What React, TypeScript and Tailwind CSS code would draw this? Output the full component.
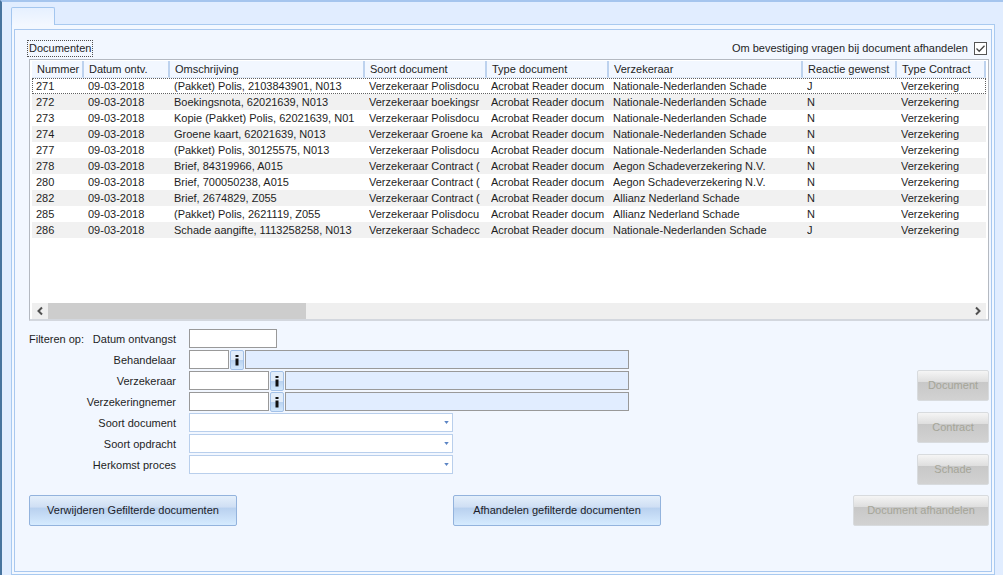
import { useState } from "react";
import clsx from "clsx";

const columns = [
  { name: "Nummer", width: "w-[52px]" },
  { name: "Datum ontv.", width: "w-[86px]" },
  { name: "Omschrijving", width: "w-[195px]" },
  { name: "Soort document", width: "w-[122px]" },
  { name: "Type document", width: "w-[122px]" },
  { name: "Verzekeraar", width: "w-[194px]" },
  { name: "Reactie gewenst", width: "w-[94px]" },
  { name: "Type Contract", width: "" },
];

const reader = "Acrobat Reader docum";
const nn = "Nationale-Nederlanden Schade";
const aegon = "Aegon Schadeverzekering N.V.";
const allianz = "Allianz Nederland Schade";

const documents = [
  ["271", "09-03-2018", "(Pakket) Polis, 2103843901, N013", "Verzekeraar Polisdocu", reader, nn, "J", "Verzekering"],
  ["272", "09-03-2018", "Boekingsnota, 62021639, N013", "Verzekeraar boekingsr", reader, nn, "N", "Verzekering"],
  ["273", "09-03-2018", "Kopie (Pakket) Polis, 62021639, N01", "Verzekeraar Polisdocu", reader, nn, "N", "Verzekering"],
  ["274", "09-03-2018", "Groene kaart, 62021639, N013", "Verzekeraar Groene ka", reader, nn, "N", "Verzekering"],
  ["277", "09-03-2018", "(Pakket) Polis, 30125575, N013", "Verzekeraar Polisdocu", reader, nn, "N", "Verzekering"],
  ["278", "09-03-2018", "Brief, 84319966, A015", "Verzekeraar Contract (", reader, aegon, "N", "Verzekering"],
  ["280", "09-03-2018", "Brief, 700050238, A015", "Verzekeraar Contract (", reader, aegon, "N", "Verzekering"],
  ["282", "09-03-2018", "Brief, 2674829, Z055", "Verzekeraar Contract (", reader, allianz, "N", "Verzekering"],
  ["285", "09-03-2018", "(Pakket) Polis, 2621119, Z055", "Verzekeraar Polisdocu", reader, allianz, "N", "Verzekering"],
  ["286", "09-03-2018", "Schade aangifte, 1113258258, N013", "Verzekeraar Schadecc", reader, nn, "J", "Verzekering"],
];

function Chevron({ d }: { d: string }) {
  return (
    <svg viewBox="0 0 8 10" className="w-2 h-[10px]" fill="none" stroke="#505050" strokeWidth="2">
      <path d={d} />
    </svg>
  );
}

function DocumentTable() {
  const [selected, setSelected] = useState("271");

  return (
    <div className="flex flex-col h-[262px] bg-white border border-[#b4b9c1] border-b-2 border-b-[#d3d7de] px-[2px] pt-px">
      <div className="flex-1 overflow-hidden">
        <table className="w-full table-fixed border-collapse">
          <thead>
            <tr>
              {columns.map((col) => (
                <th key={col.name} className={clsx("p-0 h-[17px] text-left font-normal", col.width)}>
                  <div className="h-[17px] leading-[17px] pl-[5px] whitespace-nowrap overflow-hidden bg-[#f2f7ff] border-r-2 border-b border-r-[#bdd2ee] border-b-[#dfe9f7]">
                    {col.name}
                  </div>
                </th>
              ))}
            </tr>
          </thead>
          <tbody>
            {documents.map((doc) => (
              <tr
                key={doc[0]}
                onClick={() => setSelected(doc[0])}
                className={clsx(
                  "even:bg-[#f1f1f1]",
                  selected === doc[0] && "outline-1 outline-dotted -outline-offset-1 outline-[#606060]"
                )}
              >
                {doc.map((value, i) => (
                  <td key={i} className="h-4 p-0 pl-1 pr-[2px]">
                    <div className="h-4 leading-4 overflow-hidden whitespace-nowrap">{value}</div>
                  </td>
                ))}
              </tr>
            ))}
          </tbody>
        </table>
      </div>
      <div className="flex h-4 bg-[#efefef]">
        <button aria-label="Links" className="w-4 flex items-center justify-center">
          <Chevron d="M6 1.500 L2.500 5 L6 8.500" />
        </button>
        <div className="flex-1">
          <div className="w-[28%] h-full bg-[#cdcdcd]" />
        </div>
        <button aria-label="Rechts" className="w-4 flex items-center justify-center">
          <Chevron d="M2 1.500 L5.500 5 L2 8.500" />
        </button>
      </div>
    </div>
  );
}

function Label({ id, text }: { id: string; text: string }) {
  return (
    <label htmlFor={id} className="text-right leading-[19px] pt-px h-[19px]">
      {text}
    </label>
  );
}

function LookupField({ id, small }: { id: string; small?: boolean }) {
  return (
    <div className="flex h-[19px]">
      <input
        id={id}
        type="text"
        className={clsx("h-[19px] bg-white border border-[#999] px-1 outline-none", small ? "w-10" : "w-20")}
      />
      <button
        aria-label="Zoeken"
        className="w-[14px] h-5 ml-px mr-px flex items-center justify-center rounded-xs border border-[#a3c1e8] bg-linear-to-b from-[#e2edfa] from-50% via-[#b9d2f0] via-50% to-[#d3e8fc]"
      >
        <svg viewBox="0 0 4 12" className="w-1 h-3" fill="#111">
          <path d="M0.500 1h3v2h-3z M0.500 4.500h3v7h-3z" />
        </svg>
      </button>
      <input
        type="text"
        readOnly
        aria-label="Omschrijving"
        className="flex-1 min-w-0 h-[19px] bg-[#e1edff] border border-[#999] px-1 outline-none"
      />
    </div>
  );
}

function Combo({ id }: { id: string }) {
  return (
    <div className="relative w-[264px] h-[19px]">
      <select id={id} className="block w-full h-[19px] appearance-none bg-white border border-[#b9cfec] px-1 outline-none">
        <option></option>
      </select>
      <svg viewBox="0 0 6 4" className="absolute right-1 top-2 w-[5px] h-[3px] pointer-events-none" fill="#5b84c4">
        <path d="M0 0h6L3 4z" />
      </svg>
    </div>
  );
}

function ActionButton({ text, disabled, className }: { text: string; disabled?: boolean; className: string }) {
  return (
    <button
      disabled={disabled}
      className={clsx(
        "h-[31px] rounded-xs border whitespace-nowrap",
        disabled
          ? "border-[#d8dbde] text-[#a5a598] bg-[linear-gradient(#f5f5f5,#dedede_38%,#c8c8c8_39%,#d2d2d2)]"
          : "border-[#93b3dd] text-[#1c1c28] bg-[linear-gradient(#e4effb,#cfdff4_38%,#b9d1ef_42%,#d6ebff)]",
        className
      )}
    >
      {text}
    </button>
  );
}

export default function App() {
  const [confirm, setConfirm] = useState(true);

  return (
    <div className="min-h-screen flex flex-col bg-[#e1edff] border-l-2 border-l-[#47749f] border-t-2 border-t-[#a5c5ee] pl-[9px] pr-2 pt-[5px] font-['Liberation_Sans',Arial,sans-serif] text-[11px] text-[#1e1e1e]">
      <div role="tablist" className="flex h-[17px]">
        <button
          role="tab"
          aria-selected="true"
          aria-label="Documenten"
          className="w-11 h-[18px] relative rounded-t-xs border border-b-0 border-[#a3c6ef] bg-linear-to-b from-[#e6f0ff] to-[#f3f8ff]"
        />
      </div>
      <div className="flex-1 flex flex-col border border-[#a9caf0] bg-[#f3f8ff] px-[2px] pt-1 pb-[2px]">
        <main className="flex-1 border border-[#a9c8ef] bg-[#f2f7ff] pl-[14px] pr-[2px] pt-[11px]">
          <div className="flex items-center justify-between h-[15px] mb-[3px]">
            <h1 className="-ml-px px-px leading-[15px] outline-1 outline-dotted outline-[#505050]">Documenten</h1>
            <label className="flex items-center gap-[6px]">
              Om bevestiging vragen bij document afhandelen
              <span className="relative w-[13px] h-[13px] mr-[2px]">
                <input
                  type="checkbox"
                  checked={confirm}
                  onChange={() => setConfirm(!confirm)}
                  className="block appearance-none w-[13px] h-[13px] bg-white border border-[#555]"
                />
                {confirm && (
                  <svg viewBox="0 0 13 13" className="absolute inset-0 pointer-events-none" fill="none" stroke="#444" strokeWidth="1.300">
                    <path d="M2.500 6.500 L5.200 9.200 L10.500 3.700" />
                  </svg>
                )}
              </span>
            </label>
          </div>

          <DocumentTable />

          <div className="flex justify-between items-end mt-2">
            <div className="flex pb-[11px]">
              <div className="w-[57px] leading-[19px] pt-px">Filteren op:</div>
              <div className="grid grid-cols-[90px_440px] gap-x-[13px] gap-y-[2px]">
                <Label id="datum" text="Datum ontvangst" />
                <input id="datum" type="text" className="w-[88px] h-[19px] bg-white border border-[#999] px-1 outline-none" />
                <Label id="behandelaar" text="Behandelaar" />
                <LookupField id="behandelaar" small />
                <Label id="verzekeraar" text="Verzekeraar" />
                <LookupField id="verzekeraar" />
                <Label id="nemer" text="Verzekeringnemer" />
                <LookupField id="nemer" />
                <Label id="soortdoc" text="Soort document" />
                <Combo id="soortdoc" />
                <Label id="soortopdr" text="Soort opdracht" />
                <Combo id="soortopdr" />
                <Label id="herkomst" text="Herkomst proces" />
                <Combo id="herkomst" />
              </div>
            </div>
            <div className="flex flex-col gap-[11px]">
              <ActionButton text="Document" disabled className="w-[72px]" />
              <ActionButton text="Contract" disabled className="w-[72px]" />
              <ActionButton text="Schade" disabled className="w-[72px]" />
            </div>
          </div>

          <div className="flex mt-[10px]">
            <ActionButton text="Verwijderen Gefilterde documenten" className="w-[208px]" />
            <ActionButton text="Afhandelen gefilterde documenten" className="w-[208px] ml-[216px]" />
            <ActionButton text="Document afhandelen" disabled className="w-[136px] ml-auto" />
          </div>
        </main>
      </div>
    </div>
  );
}
